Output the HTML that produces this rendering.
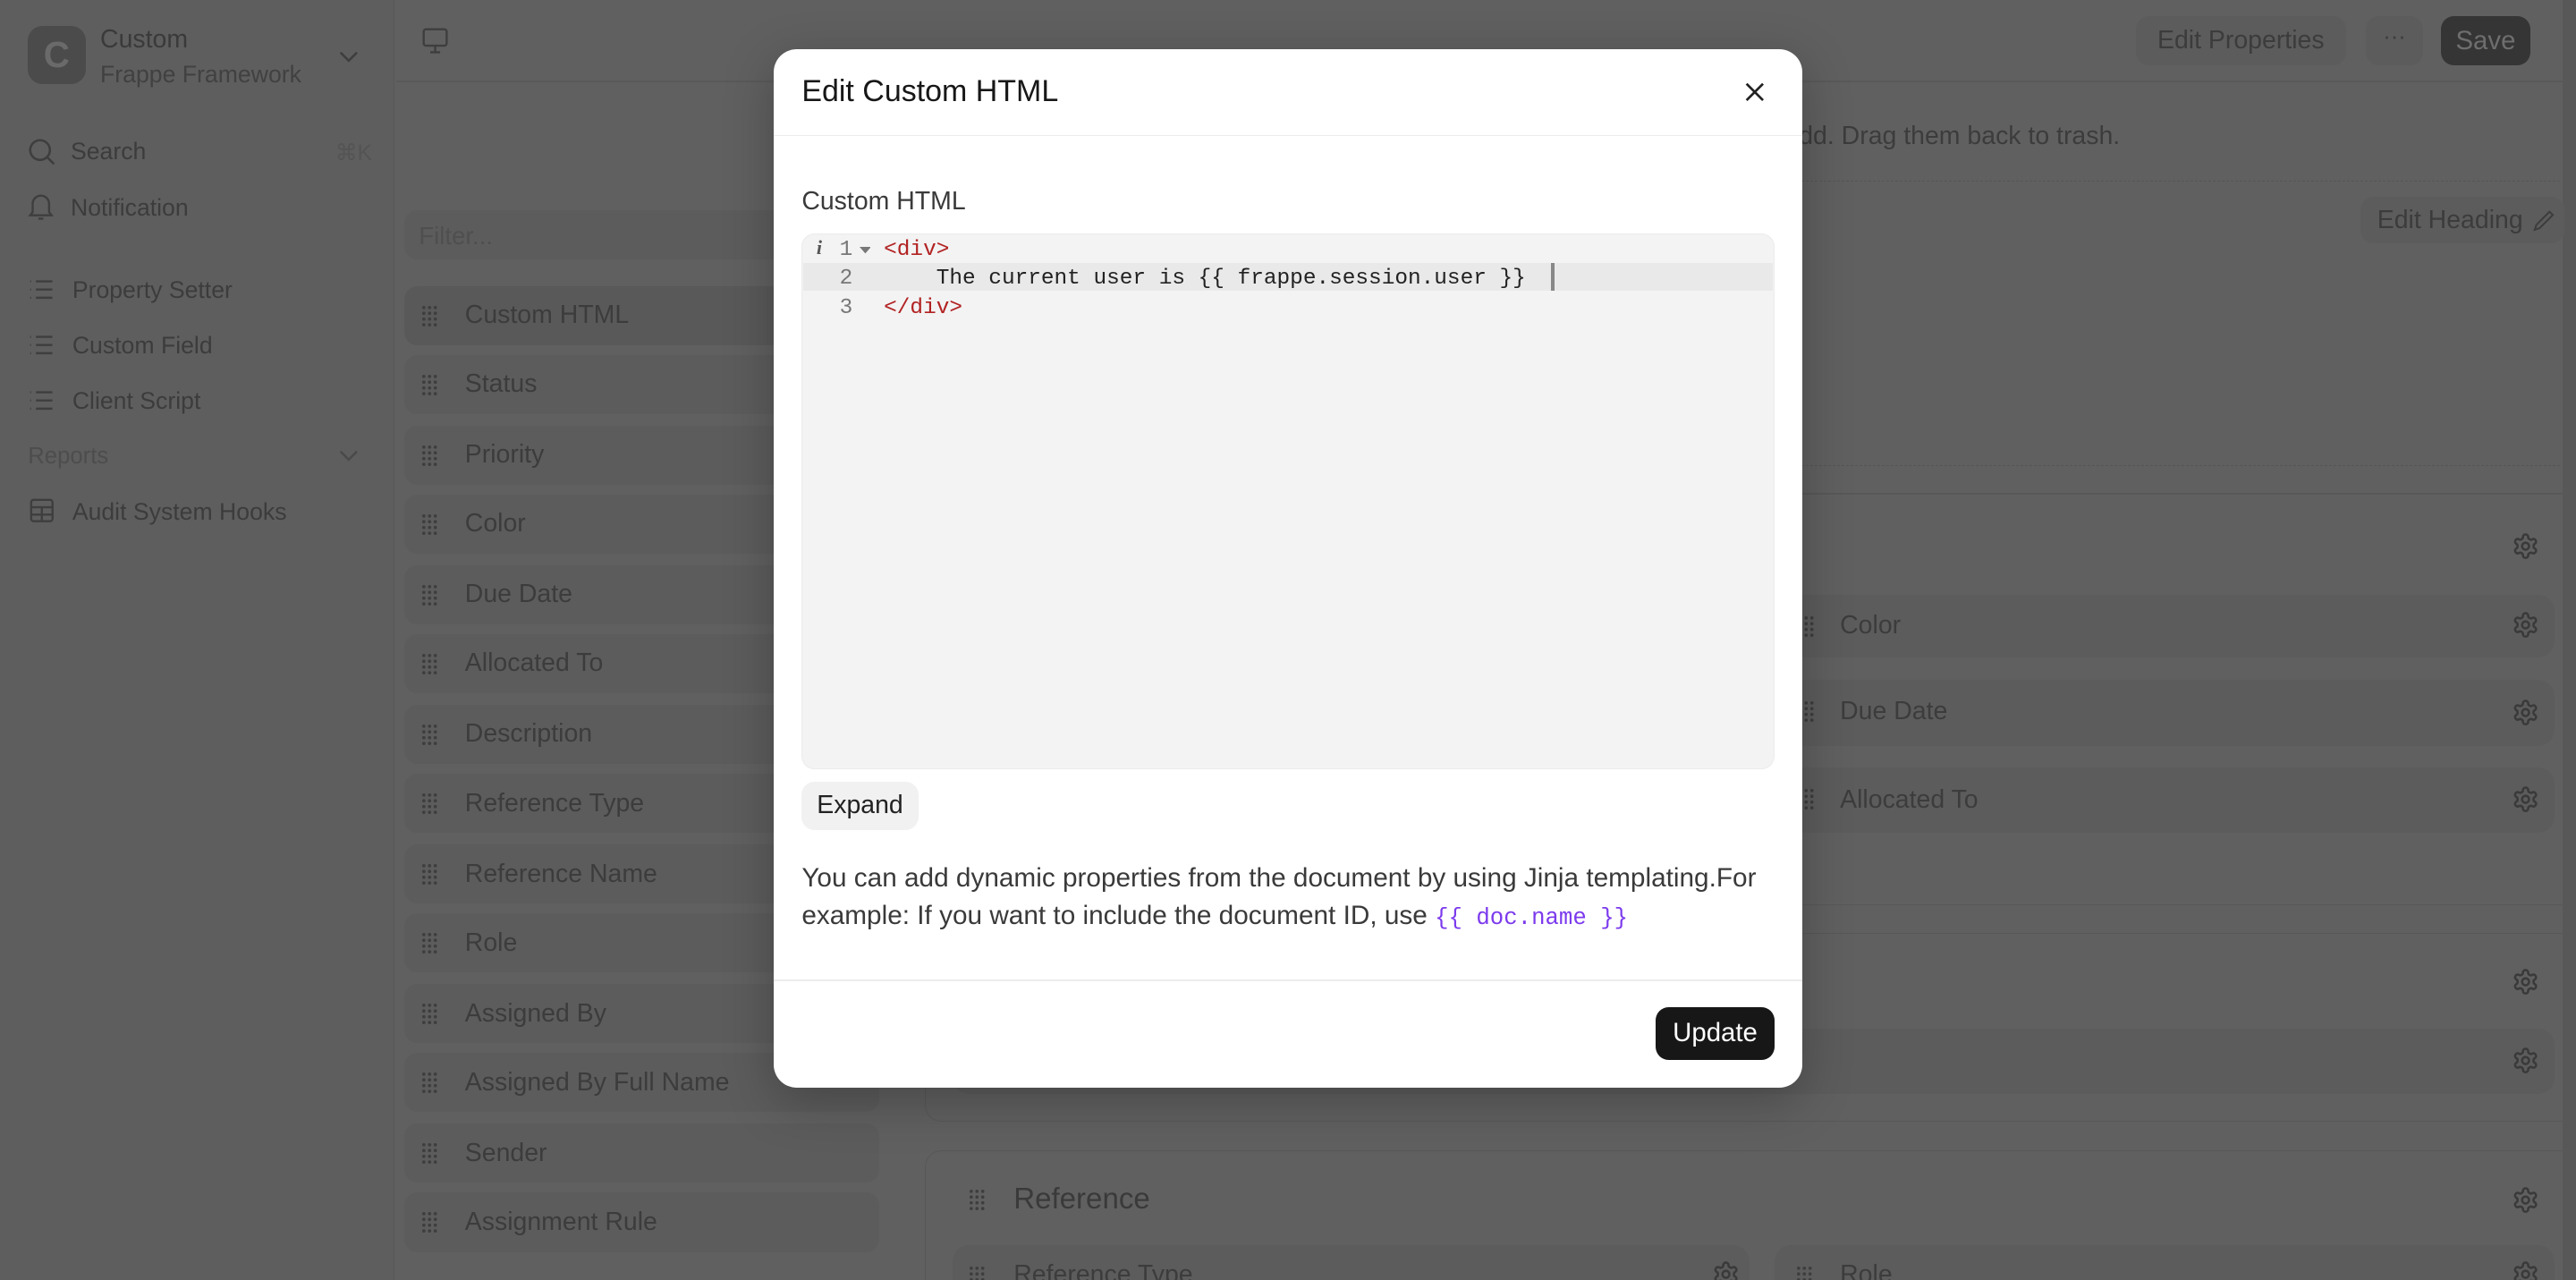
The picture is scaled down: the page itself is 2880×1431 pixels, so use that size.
<!DOCTYPE html>
<html><head><meta charset="utf-8">
<style>
*{box-sizing:border-box;margin:0;padding:0}
html,body{width:2880px;height:1430px;overflow:hidden;background:#606060}
#root{position:absolute;left:0;top:0;width:1568px;height:779px;zoom:1.83673;font-family:"Liberation Sans",sans-serif;color:#3b3b3b;background:#606060;overflow:hidden}
.a{position:absolute;white-space:nowrap}
.side{left:0;top:0;width:240px;height:779px;background:#5e5e5e;border-right:1px solid #585858}
.st{font-size:14.5px;color:#3c3c3c}
.item{position:absolute;left:246px;width:289px;height:36px;background:#5c5c5c;border-radius:8px}
.item span{position:absolute;left:37px;top:9px;font-size:15.5px;color:#3c3c3c}
.item svg{position:absolute;left:11px;top:12px}
.row{position:absolute;background:#5c5c5c;border-radius:10px}
.row span{position:absolute;left:40px;font-size:15.5px;color:#3c3c3c}
.modal{left:471px;top:30px;width:626px;height:632px;background:#fff;border-radius:14px;box-shadow:0 8px 30px rgba(0,0,0,.25)}
.code{font-family:"Liberation Mono",monospace;font-size:13.3px;white-space:pre}
</style></head><body><div id="root">
<svg width="0" height="0" style="position:absolute"><defs>
<g id="dots" fill="#3e3e3e"><circle cx="1" cy="1" r="1"/><circle cx="4.5" cy="1" r="1"/><circle cx="8" cy="1" r="1"/><circle cx="1" cy="4.5" r="1"/><circle cx="4.5" cy="4.5" r="1"/><circle cx="8" cy="4.5" r="1"/><circle cx="1" cy="8" r="1"/><circle cx="4.5" cy="8" r="1"/><circle cx="8" cy="8" r="1"/><circle cx="1" cy="11.5" r="1"/><circle cx="4.5" cy="11.5" r="1"/><circle cx="8" cy="11.5" r="1"/></g>
<g id="gear" fill="none" stroke="#3a3a3a" stroke-width="2"><path d="M12.22 2h-.44a2 2 0 0 0-2 2v.18a2 2 0 0 1-1 1.73l-.43.25a2 2 0 0 1-2 0l-.15-.08a2 2 0 0 0-2.73.73l-.22.38a2 2 0 0 0 .73 2.730l.15.1a2 2 0 0 1 1 1.72v.51a2 2 0 0 1-1 1.74l-.15.09a2 2 0 0 0-.73 2.73l.22.38a2 2 0 0 0 2.730.73l.15-.08a2 2 0 0 1 2 0l.43.25a2 2 0 0 1 1 1.73V20a2 2 0 0 0 2 2h.44a2 2 0 0 0 2-2v-.18a2 2 0 0 1 1-1.73l.43-.25a2 2 0 0 1 2 0l.15.08a2 2 0 0 0 2.73-.73l.22-.39a2 2 0 0 0-.73-2.73l-.15-.08a2 2 0 0 1-1-1.74v-.5a2 2 0 0 1 1-1.74l.15-.09a2 2 0 0 0 .73-2.73l-.22-.38a2 2 0 0 0-2.73-.73l-.15.08a2 2 0 0 1-2 0l-.43-.25a2 2 0 0 1-1-1.73V4a2 2 0 0 0-2-2z"/><circle cx="12" cy="12" r="3"/></g>
<g id="list" stroke="#3e3e3e" stroke-width="1.3" fill="none"><path d="M5 3h10M5 8h10M5 13h10M1.5 3h.5M1.5 8h.5M1.5 13h.5"/></g>
</defs></svg>

<div class="a side"></div>
<div class="a" style="left:17px;top:16px;width:35px;height:35px;border-radius:9px;background:#4b4b4b;color:#6a6a6a;font-size:22px;font-weight:bold;text-align:center;line-height:35px">C</div>
<div class="a" style="left:61px;top:15px;font-size:15.5px;color:#3a3a3a">Custom</div>
<div class="a" style="left:61px;top:37px;font-size:14.5px;color:#414141">Frappe Framework</div>
<svg class="a" style="left:205px;top:30px" width="14" height="10"><path d="M2 2l5 5 5-5" stroke="#3e3e3e" stroke-width="1.4" fill="none"/></svg>
<svg class="a" style="left:17px;top:84px" width="18" height="18"><circle cx="7.5" cy="7.5" r="6" stroke="#3e3e3e" stroke-width="1.4" fill="none"/><path d="M12 12l4 4" stroke="#3e3e3e" stroke-width="1.4"/></svg>
<div class="a st" style="left:43px;top:84px">Search</div>
<div class="a" style="left:204px;top:85px;font-size:13.5px;color:#545454">⌘K</div>
<svg class="a" style="left:17px;top:117px" width="16" height="18"><path d="M3 12V7a5 5 0 0 1 10 0v5l1.5 2h-13z M6.5 16h3" stroke="#3e3e3e" stroke-width="1.3" fill="none"/></svg>
<div class="a st" style="left:43px;top:118px">Notification</div>
<svg class="a" style="left:17px;top:168px" width="18" height="16"><use href="#list"/></svg>
<div class="a st" style="left:44px;top:168px">Property Setter</div>
<svg class="a" style="left:17px;top:202px" width="18" height="16"><use href="#list"/></svg>
<div class="a st" style="left:44px;top:202px">Custom Field</div>
<svg class="a" style="left:17px;top:236px" width="18" height="16"><use href="#list"/></svg>
<div class="a st" style="left:44px;top:236px">Client Script</div>
<div class="a" style="left:17px;top:270px;font-size:14px;color:#4d4d4d">Reports</div>
<svg class="a" style="left:205px;top:273px" width="14" height="10"><path d="M2 2l5 5 5-5" stroke="#4a4a4a" stroke-width="1.4" fill="none"/></svg>
<svg class="a" style="left:18px;top:303px" width="16" height="16"><rect x="1" y="1" width="13" height="13" rx="1.5" stroke="#3e3e3e" stroke-width="1.3" fill="none"/><path d="M1 5.5h13M7.5 5.5v8.5M1 10h13" stroke="#3e3e3e" stroke-width="1.3"/></svg>
<div class="a st" style="left:44px;top:303px">Audit System Hooks</div>

<div class="a" style="left:241px;top:49px;width:1320px;height:1px;background:#595959"></div>
<svg class="a" style="left:256px;top:16px" width="18" height="18"><rect x="2" y="2" width="14" height="10" rx="1.5" stroke="#3e3e3e" stroke-width="1.3" fill="none"/><path d="M9 12v4M6 16h6" stroke="#3e3e3e" stroke-width="1.3"/></svg>
<div class="a" style="left:1300px;top:10px;width:128px;height:30px;border-radius:8px;background:#5c5c5c;font-size:15.5px;color:#3c3c3c;text-align:center;line-height:30px">Edit Properties</div>
<div class="a" style="left:1440px;top:10px;width:35px;height:30px;border-radius:8px;background:#5c5c5c;font-size:14px;color:#3c3c3c;text-align:center;line-height:26px">···</div>
<div class="a" style="left:1486px;top:10px;width:54px;height:30px;border-radius:8px;background:#353535;font-size:16px;color:#6e6e6e;text-align:center;line-height:30px">Save</div>
<div class="a" style="left:1560px;top:0;width:8px;height:779px;background:#585858"></div>

<div class="a" style="left:246px;top:128px;width:300px;height:30px;border-radius:8px;background:#5c5c5c"></div>
<div class="a" style="left:255px;top:135px;font-size:15px;color:#4f4f4f">Filter...</div>
<div class="item" style="top:174px;background:#595959"><svg width="10" height="13"><use href="#dots"/></svg><span>Custom HTML</span></div>
<div class="item" style="top:216px"><svg width="10" height="13"><use href="#dots"/></svg><span>Status</span></div>
<div class="item" style="top:259px"><svg width="10" height="13"><use href="#dots"/></svg><span>Priority</span></div>
<div class="item" style="top:301px"><svg width="10" height="13"><use href="#dots"/></svg><span>Color</span></div>
<div class="item" style="top:344px"><svg width="10" height="13"><use href="#dots"/></svg><span>Due Date</span></div>
<div class="item" style="top:386px"><svg width="10" height="13"><use href="#dots"/></svg><span>Allocated To</span></div>
<div class="item" style="top:429px"><svg width="10" height="13"><use href="#dots"/></svg><span>Description</span></div>
<div class="item" style="top:471px"><svg width="10" height="13"><use href="#dots"/></svg><span>Reference Type</span></div>
<div class="item" style="top:514px"><svg width="10" height="13"><use href="#dots"/></svg><span>Reference Name</span></div>
<div class="item" style="top:556px"><svg width="10" height="13"><use href="#dots"/></svg><span>Role</span></div>
<div class="item" style="top:599px"><svg width="10" height="13"><use href="#dots"/></svg><span>Assigned By</span></div>
<div class="item" style="top:641px"><svg width="10" height="13"><use href="#dots"/></svg><span>Assigned By Full Name</span></div>
<div class="item" style="top:684px"><svg width="10" height="13"><use href="#dots"/></svg><span>Sender</span></div>
<div class="item" style="top:726px"><svg width="10" height="13"><use href="#dots"/></svg><span>Assignment Rule</span></div>

<div class="a" style="left:1095px;top:74px;font-size:15.5px;color:#3c3c3c">dd. Drag them back to trash.</div>
<div class="a" style="left:560px;top:110px;width:998px;height:0;border-top:1px dashed #555"></div>
<div class="a" style="left:560px;top:283px;width:998px;height:0;border-top:1px dashed #555"></div>
<div class="a" style="left:1437px;top:120px;width:124px;height:28px;border-radius:8px;background:#5c5c5c"></div>
<div class="a" style="left:1447px;top:125px;font-size:15.5px;color:#3c3c3c">Edit Heading</div>
<svg class="a" style="left:1542px;top:127px" width="14" height="14"><path d="M10 2l2 2-8 8-3 1 1-3z" stroke="#3c3c3c" stroke-width="1.1" fill="none"/></svg>
<div class="a" style="left:560px;top:300px;width:1000px;height:1px;background:#585858"></div>
<div class="a" style="left:563px;top:301px;width:997px;height:250px;border-bottom:1px solid #585858"></div>
<svg class="a" style="left:1529px;top:324px" width="17" height="17" viewBox="0 0 24 24"><use href="#gear"/></svg>
<div class="row" style="left:1085px;top:362px;width:470px;height:38px"><span style="left:35px;top:10px">Color</span></div>
<div class="row" style="left:1085px;top:414px;width:470px;height:40px"><span style="left:35px;top:10px">Due Date</span></div>
<div class="row" style="left:1085px;top:467px;width:470px;height:40px"><span style="left:35px;top:11px">Allocated To</span></div>
<svg class="a" style="left:1095px;top:375px" width="10" height="13"><use href="#dots"/></svg>
<svg class="a" style="left:1095px;top:427px" width="10" height="13"><use href="#dots"/></svg>
<svg class="a" style="left:1095px;top:480px" width="10" height="13"><use href="#dots"/></svg>
<svg class="a" style="left:1529px;top:372px" width="17" height="17" viewBox="0 0 24 24"><use href="#gear"/></svg>
<svg class="a" style="left:1529px;top:425px" width="17" height="17" viewBox="0 0 24 24"><use href="#gear"/></svg>
<svg class="a" style="left:1529px;top:478px" width="17" height="17" viewBox="0 0 24 24"><use href="#gear"/></svg>

<div class="a" style="left:563px;top:568px;width:997px;height:115px;border:1px solid #585858;border-right:none;border-radius:10px 0 0 10px"></div>
<div class="row" style="left:580px;top:626px;width:975px;height:40px"></div>
<svg class="a" style="left:1529px;top:589px" width="17" height="17" viewBox="0 0 24 24"><use href="#gear"/></svg>
<svg class="a" style="left:1529px;top:637px" width="17" height="17" viewBox="0 0 24 24"><use href="#gear"/></svg>

<div class="a" style="left:563px;top:700px;width:997px;height:100px;border:1px solid #585858;border-right:none;border-radius:10px 0 0 0"></div>
<svg class="a" style="left:590px;top:724px" width="10" height="13"><use href="#dots"/></svg>
<div class="a" style="left:617px;top:720px;font-size:18px;color:#3a3a3a">Reference</div>
<svg class="a" style="left:1529px;top:722px" width="17" height="17" viewBox="0 0 24 24"><use href="#gear"/></svg>
<div class="row" style="left:580px;top:758px;width:485px;height:40px"><span style="left:37px;top:9px">Reference Type</span></div>
<div class="row" style="left:1080px;top:758px;width:475px;height:40px"><span style="left:40px;top:9px">Role</span></div>
<svg class="a" style="left:590px;top:771px" width="10" height="13"><use href="#dots"/></svg>
<svg class="a" style="left:1094px;top:771px" width="10" height="13"><use href="#dots"/></svg>
<svg class="a" style="left:1042px;top:767px" width="17" height="17" viewBox="0 0 24 24"><use href="#gear"/></svg>
<svg class="a" style="left:1529px;top:767px" width="17" height="17" viewBox="0 0 24 24"><use href="#gear"/></svg>

<div class="a modal">
  <div class="a" style="left:17px;top:15px;font-size:18.5px;color:#171717">Edit Custom HTML</div>
  <svg class="a" style="left:590px;top:19px" width="14" height="14"><path d="M2 2l10 10M12 2L2 12" stroke="#222" stroke-width="1.5"/></svg>
  <div class="a" style="left:0;top:52px;width:626px;height:1px;background:#ececec"></div>
  <div class="a" style="left:17px;top:84px;font-size:15.5px;color:#3a3a3a">Custom HTML</div>
  <div class="a" style="left:17px;top:112px;width:592px;height:326px;background:#f3f3f3;border-radius:8px;border:1px solid #ebebeb"></div>
  <div class="a" style="left:18px;top:130px;width:590px;height:17px;background:#e9e9e9"></div>
  <div class="a" style="left:473px;top:130px;width:2px;height:17px;background:#888"></div>
  <div class="a" style="left:26px;top:114px;color:#555;font-weight:bold;font-family:'Liberation Serif',serif;font-style:italic;font-size:12px">i</div>
  <div class="a code" style="left:40px;top:115px;color:#777">1</div>
  <svg class="a" style="left:52px;top:120px" width="7" height="5"><path d="M0 0h7L3.5 4z" fill="#777"/></svg>
  <div class="a code" style="left:40px;top:132px;color:#777">2</div>
  <div class="a code" style="left:40px;top:150px;color:#777">3</div>
  <div class="a code" style="left:67px;top:115px;color:#b22222">&lt;div&gt;</div>
  <div class="a code" style="left:67px;top:132px;color:#222">    The current user is {{ frappe.session.user }}</div>
  <div class="a code" style="left:67px;top:150px;color:#b22222">&lt;/div&gt;</div>
  <div class="a" style="left:17px;top:446px;width:71px;height:29px;border-radius:8px;background:#f1f1f1;font-size:15.5px;color:#222;text-align:center;line-height:29px">Expand</div>
  <div class="a" style="left:17px;top:493px;font-size:16.2px;color:#3a3a3a;line-height:23px">You can add dynamic properties from the document by using Jinja templating.For<br>example: If you want to include the document ID, use <span class="code" style="color:#7c3aed;font-size:14px">{{ doc.name }}</span></div>
  <div class="a" style="left:0;top:566px;width:626px;height:1px;background:#ececec"></div>
  <div class="a" style="left:537px;top:583px;width:72px;height:32px;border-radius:8px;background:#171717;color:#fff;font-size:16px;text-align:center;line-height:32px">Update</div>
</div>
</div></body></html>
